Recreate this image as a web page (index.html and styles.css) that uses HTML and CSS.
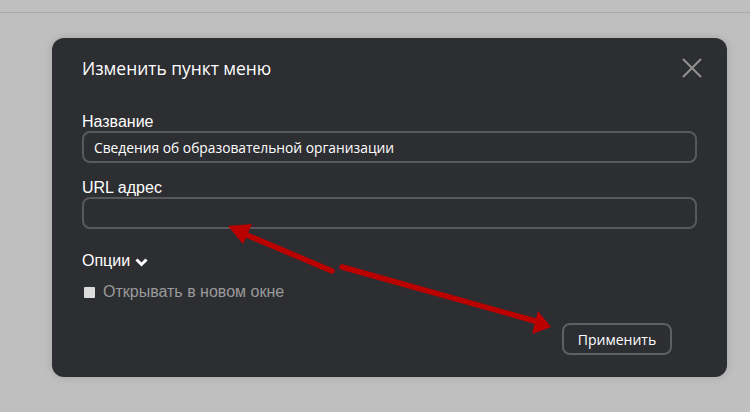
FILE: index.html
```html
<!DOCTYPE html>
<html lang="ru">

<head>
    <meta charset="UTF-8">
    <meta name="viewport" content="width=device-width, initial-scale=1.0">
    <title>Изменить пункт меню</title>
    <link rel="stylesheet" href="styles.css">
</head>

<body>
    <div class="topbar"></div>

    <div class="modal">
        <div class="modal-header">
            <h2>Изменить пункт меню</h2>
            <button class="close" aria-label="Закрыть">
                <svg width="20" height="20" viewBox="0 0 20 20">
                    <path d="M1 1 L19 19 M19 1 L1 19" stroke="#929292" stroke-width="2" fill="none" />
                </svg>
            </button>
        </div>

        <label class="field-label">Название</label>
        <input class="field" type="text" value="Сведения об образовательной организации">

        <label class="field-label second">URL адрес</label>
        <input class="field" type="text" value="">

        <div class="options">
            Опции
            <svg class="chevron" width="13" height="9" viewBox="0 0 13 9">
                <path d="M1.5 1.5 L6.5 6.5 L11.5 1.5" stroke="#fff" stroke-width="3" fill="none" />
            </svg>
        </div>

        <label class="check-row">
            <span class="checkbox"></span>
            Открывать в новом окне
        </label>

        <div class="modal-footer">
            <button class="apply">Применить</button>
        </div>
    </div>

    <!-- annotation arrows drawn over the screenshot -->
    <svg class="annotation" width="750" height="412" viewBox="0 0 750 412">
        <g fill="#bb0000">
            <path d="M332 271 L242 233" stroke="#bb0000" stroke-width="5.5" stroke-linecap="round" />
            <polygon points="228,226 252,224 243,244" />
            <path d="M342 267 L535 321" stroke="#bb0000" stroke-width="5.5" stroke-linecap="round" />
            <polygon points="551,327 538,311 532,334" />
        </g>
    </svg>
</body>

</html>
```

FILE: styles.css
```css
* {
    margin: 0;
    padding: 0;
    box-sizing: border-box;
}

body {
    background-color: #bfbfbf;
    font-family: 'Liberation Sans', Arial, sans-serif;
    color: #ffffff;
    width: 750px;
    height: 412px;
    overflow: hidden;
    position: relative;
}

.topbar {
    height: 13px;
    border-bottom: 1px solid #a9a9a9;
}

.modal {
    margin: 25px 0 0 52px;
    width: 675px;
    height: 339px;
    background-color: #2d2e32;
    border-radius: 12px;
    padding: 18px 30px 22px 30px;
    box-shadow: 0 0 8px rgba(0, 0, 0, 0.15);
    display: flex;
    flex-direction: column;
}

.modal-header {
    display: flex;
    justify-content: space-between;
    align-items: center;
    height: 24px;
}

.modal-header h2 {
    font-family: 'Open Sans', sans-serif;
    font-weight: 400;
    font-size: 17.4px;
    line-height: 24px;
}

.close {
    background: none;
    border: none;
    width: 20px;
    height: 20px;
    margin-right: -5px;
    cursor: pointer;
}

.close svg {
    display: block;
}

.field-label {
    display: block;
    font-size: 16px;
    line-height: 18px;
    margin-top: 33px;
}

.field-label.second {
    margin-top: 16px;
}

.field {
    display: block;
    width: 100%;
    height: 32px;
    background-color: #2d2e32;
    border: 2px solid #58595d;
    border-radius: 8px;
    padding: 0 10px;
    color: #ffffff;
    font-family: 'Open Sans', sans-serif;
    font-size: 13.8px;
    outline: none;
}

.options {
    display: flex;
    align-items: center;
    gap: 5px;
    font-size: 16px;
    line-height: 20px;
    margin-top: 22px;
}

.chevron {
    margin-top: 2px;
}

.check-row {
    display: flex;
    align-items: center;
    gap: 8px;
    margin-top: 12px;
    font-size: 16px;
    line-height: 18px;
    color: #9a9a9a;
    padding-left: 2px;
}

.checkbox {
    width: 11px;
    height: 11px;
    background-color: #dcdcdc;
    border-radius: 1px;
}

.modal-footer {
    display: flex;
    justify-content: flex-end;
    margin-top: 22px;
    padding-right: 25px;
}

.apply {
    height: 32px;
    width: 110px;
    background-color: #2d2e32;
    border: 2px solid #5e5f63;
    border-radius: 8px;
    color: #ffffff;
    font-family: 'Open Sans', sans-serif;
    font-size: 14px;
    cursor: pointer;
}

.annotation {
    position: absolute;
    left: 0;
    top: 0;
    pointer-events: none;
}
```
